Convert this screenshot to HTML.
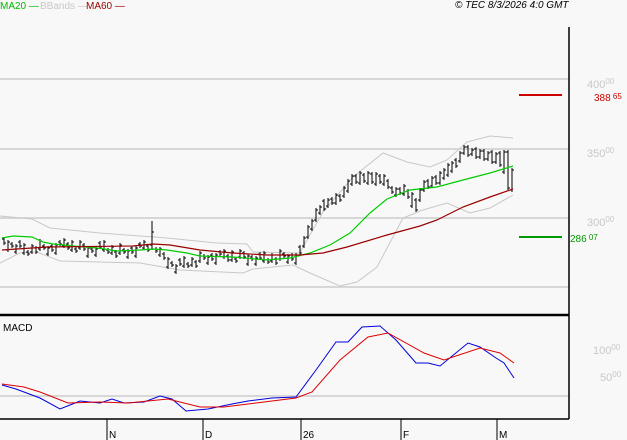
<!DOCTYPE html><html><head><style>
body{margin:0;background:#f8f8f8;width:627px;height:440px;overflow:hidden;font-family:"Liberation Sans",sans-serif}
svg{position:absolute;left:0;top:0}
.t{font-size:10px}
</style></head><body>
<svg width="627" height="440" xmlns="http://www.w3.org/2000/svg">
<g stroke="#cccccc" stroke-width="1.5" fill="none">
<path d="M0 79H569M0 149H569M0 218H569M0 287H569M0 396H569"/>
</g>
<g fill="none" stroke="#c8c8c8" stroke-width="1">
<polyline points="0,216 32,219 50,228 100,233 167,238 217,243 247,244 253,252 300,253 303,247 323,212 353,177 383,153 407,162 430,167 447,160 467,142 490,136 513,138"/>
<polyline points="0,263 20,253 37,252 60,261 140,263 180,270 243,273 253,269 293,265 310,273 340,286 357,282 377,267 403,218 423,210 447,203 470,213 490,208 513,195"/>
</g>
<path fill="none" stroke="#000" stroke-width="1" shape-rendering="crispEdges" d="
M4 237V245M4 239h-2M4 243h2
M8 240V252M8 250h-2M8 242h2
M12 242V248M12 244h-2M12 246h2
M16 244V254M16 252h-2M16 246h2
M20 240V248M20 242h-2M20 246h2
M24 243V255M24 253h-2M24 245h2
M28 250V256M28 252h-2M28 254h2
M32 244V254M32 252h-2M32 246h2
M36 246V254M36 248h-2M36 252h2
M40 239V251M40 249h-2M40 241h2
M44 244V250M44 246h-2M44 248h2
M48 246V256M48 254h-2M48 248h2
M52 244V252M52 246h-2M52 250h2
M56 243V255M56 253h-2M56 245h2
M60 240V246M60 242h-2M60 244h2
M64 238V248M64 246h-2M64 240h2
M68 242V250M68 244h-2M68 248h2
M72 240V252M72 250h-2M72 242h2
M76 247V253M76 249h-2M76 251h2
M80 240V250M80 248h-2M80 242h2
M84 243V251M84 245h-2M84 249h2
M88 246V258M88 256h-2M88 248h2
M92 247V253M92 249h-2M92 251h2
M96 247V257M96 255h-2M96 249h2
M100 241V249M100 243h-2M100 247h2
M104 240V252M104 250h-2M104 242h2
M108 248V254M108 250h-2M108 252h2
M112 245V255M112 253h-2M112 247h2
M116 250V258M116 252h-2M116 256h2
M120 243V255M120 253h-2M120 245h2
M124 248V254M124 250h-2M124 252h2
M128 249V259M128 257h-2M128 251h2
M132 246V254M132 248h-2M132 252h2
M136 246V258M136 256h-2M136 248h2
M140 242V248M140 244h-2M140 246h2
M144 240V250M144 248h-2M144 242h2
M148 244V252M148 246h-2M148 250h2
M152 221V250M152 245h-2M152 232h2
M156 247V253M156 249h-2M156 251h2
M160 247V257M160 255h-2M160 249h2
M164 252V260M164 254h-2M164 258h2
M168 257V269M168 267h-2M168 259h2
M172 261V267M172 263h-2M172 265h2
M176 264V274M176 272h-2M176 266h2
M180 258V266M180 260h-2M180 264h2
M184 256V268M184 266h-2M184 258h2
M188 262V268M188 264h-2M188 266h2
M192 257V267M192 265h-2M192 259h2
M196 260V268M196 262h-2M196 266h2
M200 251V263M200 261h-2M200 253h2
M204 254V260M204 256h-2M204 258h2
M208 255V265M208 263h-2M208 257h2
M212 253V261M212 255h-2M212 259h2
M216 253V265M216 263h-2M216 255h2
M220 250V256M220 252h-2M220 254h2
M224 249V259M224 257h-2M224 251h2
M228 254V262M228 256h-2M228 260h2
M232 250V262M232 260h-2M232 252h2
M236 257V263M236 259h-2M236 261h2
M240 249V259M240 257h-2M240 251h2
M244 251V259M244 253h-2M244 257h2
M248 254V266M248 264h-2M248 256h2
M252 255V261M252 257h-2M252 259h2
M256 256V266M256 264h-2M256 258h2
M260 252V260M260 254h-2M260 258h2
M264 251V263M264 261h-2M264 253h2
M268 258V264M268 260h-2M268 262h2
M272 253V263M272 261h-2M272 255h2
M276 257V265M276 259h-2M276 263h2
M280 249V261M280 259h-2M280 251h2
M284 252V258M284 254h-2M284 256h2
M288 254V264M288 262h-2M288 256h2
M292 253V261M292 255h-2M292 259h2
M296 253V265M296 263h-2M296 255h2
M300 245V255M300 247h-2M300 253h2
M304 236V248M304 246h-2M304 238h2
M308 225V239M308 237h-2M308 227h2
M312 219V231M312 229h-2M312 221h2
M316 208V222M316 220h-2M316 210h2
M320 205V215M320 213h-2M320 207h2
M324 199V211M324 201h-2M324 209h2
M328 198V208M328 206h-2M328 200h2
M332 197V205M332 199h-2M332 203h2
M336 193V205M336 203h-2M336 195h2
M340 194V202M340 196h-2M340 200h2
M344 186V198M344 196h-2M344 188h2
M348 179V193M348 191h-2M348 181h2
M352 174V186M352 184h-2M352 176h2
M356 174V184M356 176h-2M356 182h2
M360 171V185M360 183h-2M360 173h2
M364 173V183M364 175h-2M364 181h2
M368 171V185M368 183h-2M368 173h2
M372 172V184M372 174h-2M372 182h2
M376 172V186M376 184h-2M376 174h2
M380 174V184M380 176h-2M380 182h2
M384 174V186M384 184h-2M384 176h2
M388 179V189M388 181h-2M388 187h2
M392 186V194M392 188h-2M392 192h2
M396 187V197M396 195h-2M396 189h2
M400 187V195M400 189h-2M400 193h2
M404 184V196M404 194h-2M404 186h2
M408 189V199M408 191h-2M408 197h2
M412 192V208M412 206h-2M412 194h2
M416 198V212M416 200h-2M416 210h2
M420 188V202M420 200h-2M420 190h2
M424 180V192M424 190h-2M424 182h2
M428 179V189M428 181h-2M428 187h2
M432 176V188M432 186h-2M432 178h2
M436 175V185M436 177h-2M436 183h2
M440 171V185M440 183h-2M440 173h2
M444 168V180M444 178h-2M444 170h2
M448 163V177M448 175h-2M448 165h2
M452 161V173M452 171h-2M452 163h2
M456 158V168M456 160h-2M456 166h2
M460 151V163M460 161h-2M460 153h2
M464 145V155M464 153h-2M464 147h2
M468 145V157M468 147h-2M468 155h2
M472 148V156M472 154h-2M472 150h2
M476 147V159M476 149h-2M476 157h2
M480 149V159M480 157h-2M480 151h2
M484 149V161M484 151h-2M484 159h2
M488 151V161M488 159h-2M488 153h2
M492 150V164M492 152h-2M492 162h2
M496 152V164M496 162h-2M496 154h2
M500 151V167M500 153h-2M500 165h2
M504 150V174M504 172h-2M504 152h2
M508 150V190M508 152h-2M508 188h2
M512 168V192M512 190h-2M512 170h2"/>
<polyline fill="none" stroke="#00cc00" stroke-width="1.2" points="2,238 13,236 32,237 43,242 53,244 73,246 97,248 117,251 140,250 153,249 167,250 187,253 200,256 233,257 267,260 290,258 310,253 330,245 350,233 370,213 387,199 410,190 437,187 463,180 490,173 513,166"/>
<polyline fill="none" stroke="#990000" stroke-width="1.2" points="2,250 47,247 133,246 153,244 170,245 200,250 233,253 267,255 300,255 323,253 347,247 387,235 420,226 437,220 463,207 490,197 513,189"/>
<path d="M519 95H562" stroke="#cc0000" stroke-width="2"/>
<path d="M519 237H562" stroke="#009900" stroke-width="2"/>
<polyline fill="none" stroke="#0000dd" stroke-width="1" points="2,385 16,389 40,398 60,409 70,405 80,401 100,403 112,399 124,403 144,402 160,396 172,399 186,411 208,409 232,404 248,401 272,398 296,397 316,370 336,342 348,342 362,327 380,326 396,340 416,363 428,363 440,366 468,343 480,347 496,358 504,363 514,378"/>
<polyline fill="none" stroke="#dd0000" stroke-width="1" points="2,384 24,387 40,392 68,403 100,402 128,403 168,399 200,407 224,407 256,403 296,398 312,392 340,360 368,337 388,333 424,353 444,360 480,348 500,353 514,363"/>
<path d="M569 27V419M0 419H569" stroke="#000" stroke-width="1.5" fill="none"/>
<path d="M0 315H569" stroke="#000" stroke-width="2.5"/>
<path d="M107 419V440M203 419V440M301 419V440M401 419V440M497 419V440" stroke="#000" stroke-width="1"/>
<g class="t" fill="#000">
<text x="109" y="438">N</text><text x="205" y="438">D</text><text x="303" y="438">26</text><text x="403" y="438">F</text><text x="499" y="438">M</text>
<text x="3" y="331">MACD</text>
<text x="455" y="8" font-style="italic">© TEC 8/3/2026 4:0 GMT</text>
<text x="0" y="9" fill="#00bb00">MA20 —</text>
<text x="40" y="9" fill="#c8c8c8">BBands —</text>
<text x="86" y="9" fill="#990000">MA60 —</text>
</g>
<g class="t" fill="#c8c8c8">
<text x="587" y="88" font-size="11">400<tspan font-size="8" dy="-4">00</tspan></text>
<text x="587" y="157" font-size="11">350<tspan font-size="8" dy="-4">00</tspan></text>
<text x="587" y="226" font-size="11">300<tspan font-size="8" dy="-4">00</tspan></text>
<text x="593" y="354" font-size="11">100<tspan font-size="8" dy="-4">00</tspan></text>
<text x="600" y="381" font-size="11">50<tspan font-size="8" dy="-4">00</tspan></text>
</g>
<text x="594" y="101" font-size="10" fill="#cc0000">388<tspan font-size="8" dy="-2"> 65</tspan></text>
<text x="570" y="242" font-size="10" fill="#009900">286<tspan font-size="8" dy="-2"> 07</tspan></text>
</svg>
</body></html>
